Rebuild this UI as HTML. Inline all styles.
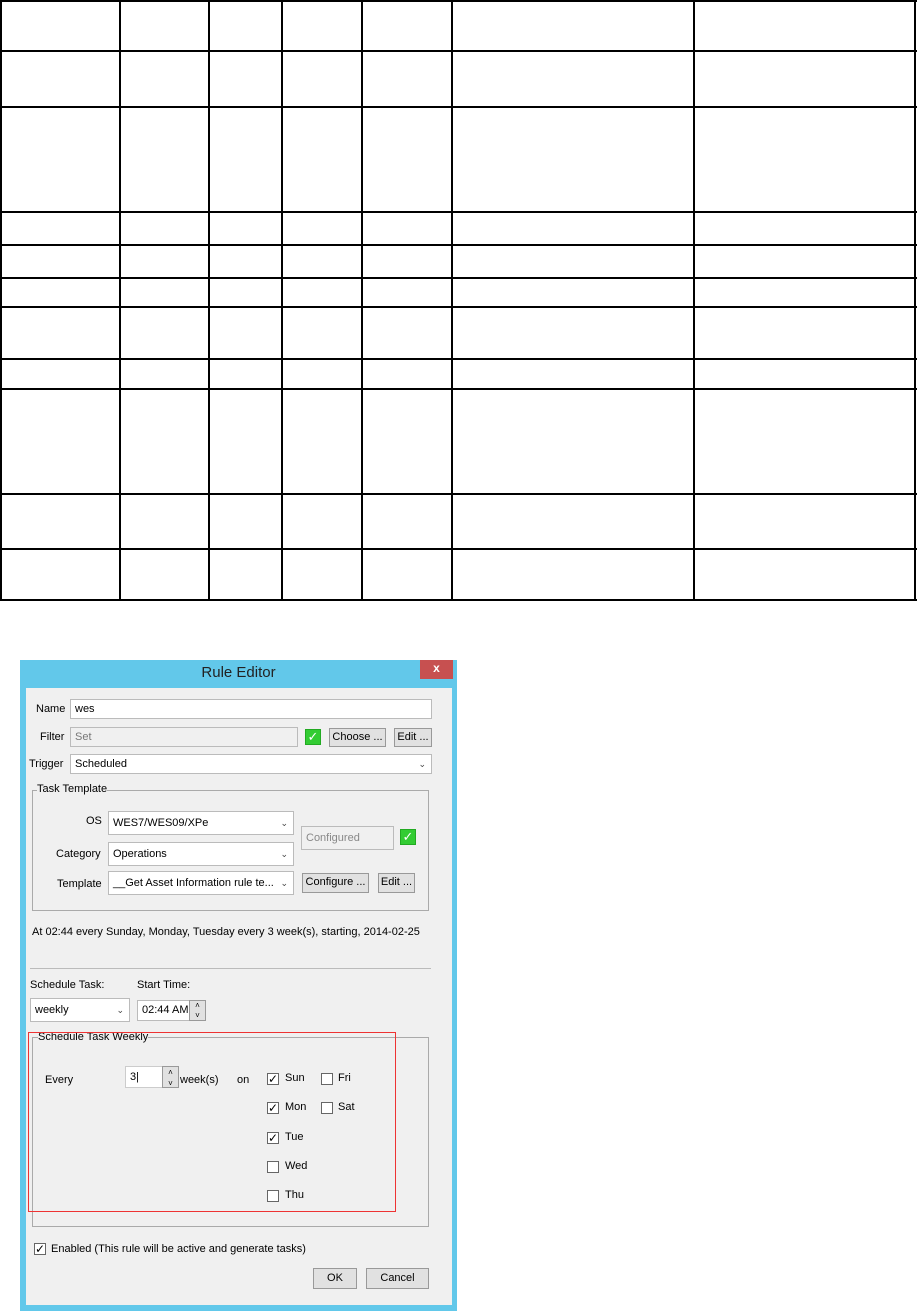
<!DOCTYPE html>
<html><head><meta charset="utf-8"><style>
body{margin:0;width:917px;height:1312px;background:#fff;position:relative;overflow:hidden;font-family:"Liberation Sans",sans-serif;}
.v,.h{position:absolute;background:#000}
.v{width:1.5px;top:0;height:601px}
.h{height:1.5px;left:0;width:917px}
.a{position:absolute}
.dlg{font-size:11px;color:#000}
.in{position:absolute;background:#fff;border:1px solid #bbb;box-sizing:border-box;padding-left:4px;line-height:18px;font-size:11px}
.dis{background:#f0f0f0;color:#777}
.btn{position:absolute;background:#e1e1e1;border:1px solid #999;box-sizing:border-box;text-align:center;font-size:11px;line-height:17px}
.arr{position:absolute;right:5px;top:0;color:#444;font-size:9px}
.cb{position:absolute;width:12px;height:12px;border:1px solid #666;background:#fff;box-sizing:border-box;font-size:12px;line-height:10px;text-align:center}
.lbl{position:absolute;font-size:11px}
.grp{position:absolute;border:1px solid #aaa;box-sizing:border-box}
.gc{position:absolute;width:16px;height:16px;background:#3c3;border:1px solid #2a2;box-sizing:border-box;color:#fff;font-size:13px;line-height:14px;text-align:center}
</style></head><body>
<div class="v" style="left:0"></div><div class="v" style="left:119px"></div><div class="v" style="left:208px"></div><div class="v" style="left:281px"></div><div class="v" style="left:361px"></div><div class="v" style="left:451px"></div><div class="v" style="left:693px"></div><div class="v" style="left:914px"></div>
<div class="h" style="top:0"></div><div class="h" style="top:50px"></div><div class="h" style="top:106px"></div><div class="h" style="top:211px"></div><div class="h" style="top:244px"></div><div class="h" style="top:277px"></div><div class="h" style="top:306px"></div><div class="h" style="top:358px"></div><div class="h" style="top:388px"></div><div class="h" style="top:493px"></div><div class="h" style="top:548px"></div><div class="h" style="top:599px"></div>

<div class="dlg">
<div class="a" style="left:20px;top:660px;width:437px;height:651px;background:#62c8ea"></div>
<div class="a" style="left:26px;top:688px;width:426px;height:617px;background:#f0f0f0"></div>
<div class="a" style="left:20px;top:664px;width:437px;text-align:center;font-size:15px;color:#222">Rule Editor</div>
<div class="a" style="left:420px;top:660px;width:33px;height:19px;background:#c75050;color:#fff;font-weight:bold;text-align:center;font-size:12px;line-height:17px">x</div>

<div class="lbl" style="left:36px;top:703px">Name</div>
<div class="in" style="left:70px;top:699px;width:362px;height:20px">wes</div>
<div class="lbl" style="left:40px;top:731px">Filter</div>
<div class="in dis" style="left:70px;top:727px;width:228px;height:20px">Set</div>
<div class="gc" style="left:305px;top:729px">✓</div>
<div class="btn" style="left:329px;top:728px;width:57px;height:19px">Choose ...</div>
<div class="btn" style="left:394px;top:728px;width:38px;height:19px">Edit ...</div>
<div class="lbl" style="left:29px;top:758px">Trigger</div>
<div class="in" style="left:70px;top:754px;width:362px;height:20px">Scheduled<span class="arr">⌄</span></div>

<div class="grp" style="left:32px;top:790px;width:397px;height:121px"></div>
<div class="lbl" style="left:37px;top:783px;background:#f0f0f0">Task Template</div>
<div class="lbl" style="left:86px;top:815px">OS</div>
<div class="in" style="left:108px;top:811px;width:186px;height:24px;line-height:22px">WES7/WES09/XPe<span class="arr">⌄</span></div>
<div class="lbl" style="left:56px;top:848px">Category</div>
<div class="in" style="left:108px;top:842px;width:186px;height:24px;line-height:22px">Operations<span class="arr">⌄</span></div>
<div class="lbl" style="left:57px;top:878px">Template</div>
<div class="in" style="left:108px;top:871px;width:186px;height:24px;line-height:22px">__Get Asset Information rule te...<span class="arr">⌄</span></div>
<div class="in dis" style="left:301px;top:826px;width:93px;height:24px;line-height:22px;color:#888">Configured</div>
<div class="gc" style="left:400px;top:829px">✓</div>
<div class="btn" style="left:302px;top:873px;width:67px;height:20px">Configure ...</div>
<div class="btn" style="left:378px;top:873px;width:37px;height:20px">Edit ...</div>

<div class="lbl" style="left:32px;top:926px">At 02:44 every Sunday, Monday, Tuesday every 3 week(s), starting, 2014-02-25</div>
<div class="a" style="left:30px;top:968px;width:401px;height:1px;background:#bbb"></div>
<div class="lbl" style="left:30px;top:979px">Schedule Task:</div>
<div class="lbl" style="left:137px;top:979px">Start Time:</div>
<div class="in" style="left:30px;top:998px;width:100px;height:24px;line-height:22px">weekly<span class="arr">⌄</span></div>
<div class="in" style="left:137px;top:1000px;width:69px;height:21px;line-height:19px">02:44 AM</div>
<div class="btn" style="left:189px;top:1000px;width:17px;height:21px;font-size:8px;line-height:10px">˄<br>˅</div>

<div class="grp" style="left:32px;top:1037px;width:397px;height:190px"></div>
<div class="lbl" style="left:38px;top:1031px;background:#f0f0f0">Schedule Task Weekly</div>
<div class="a" style="left:28px;top:1032px;width:368px;height:180px;border:1px solid #e33;box-sizing:border-box"></div>
<div class="lbl" style="left:45px;top:1074px">Every</div>
<div class="in" style="left:125px;top:1066px;width:54px;height:22px;line-height:20px;border-color:#ccc">3|</div>
<div class="btn" style="left:162px;top:1066px;width:17px;height:22px;font-size:8px;line-height:11px">˄<br>˅</div>
<div class="lbl" style="left:180px;top:1074px">week(s)</div>
<div class="lbl" style="left:237px;top:1074px">on</div>
<div class="cb" style="left:267px;top:1073px">✓</div><div class="lbl" style="left:285px;top:1072px">Sun</div>
<div class="cb" style="left:267px;top:1102px">✓</div><div class="lbl" style="left:285px;top:1101px">Mon</div>
<div class="cb" style="left:267px;top:1132px">✓</div><div class="lbl" style="left:285px;top:1131px">Tue</div>
<div class="cb" style="left:267px;top:1161px"></div><div class="lbl" style="left:285px;top:1160px">Wed</div>
<div class="cb" style="left:267px;top:1190px"></div><div class="lbl" style="left:285px;top:1189px">Thu</div>
<div class="cb" style="left:321px;top:1073px"></div><div class="lbl" style="left:338px;top:1072px">Fri</div>
<div class="cb" style="left:321px;top:1102px"></div><div class="lbl" style="left:338px;top:1101px">Sat</div>

<div class="cb" style="left:34px;top:1243px">✓</div>
<div class="lbl" style="left:51px;top:1243px">Enabled (This rule will be active and generate tasks)</div>
<div class="btn" style="left:313px;top:1268px;width:44px;height:21px;line-height:19px">OK</div>
<div class="btn" style="left:366px;top:1268px;width:63px;height:21px;line-height:19px">Cancel</div>
</div>
</body></html>
